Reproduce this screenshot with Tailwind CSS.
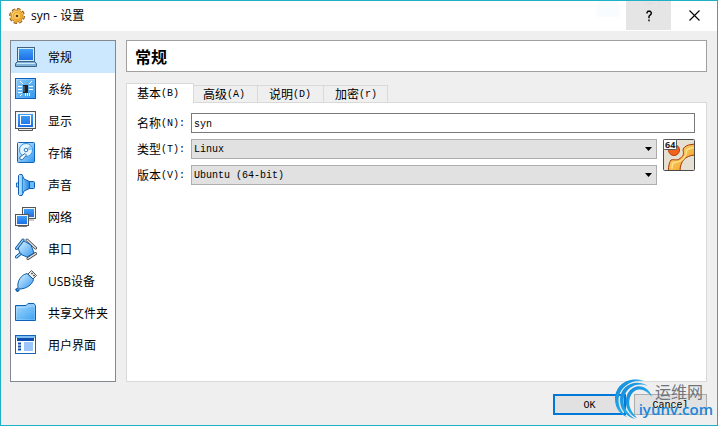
<!DOCTYPE html>
<html lang="zh-CN">
<head>
    <meta charset="UTF-8">
    <meta name="viewport" content="width=device-width, initial-scale=1.0">
    <title>syn - 设置</title>
    <script src="https://cdn.jsdelivr.net/npm/@tailwindcss/browser@4"></script>
</head>
<body class="bg-[#efefef] text-black text-xs font-['Open_Sans','Noto_Sans_CJK_SC',sans-serif]">
    <!-- Shared gradients for the icons -->
    <svg class="absolute w-0 h-0" aria-hidden="true">
        <defs>
            <linearGradient id="blue" x1="0" y1="0" x2="0" y2="1">
                <stop offset="0" stop-color="#41a0f6"/>
                <stop offset="1" stop-color="#1b6fe6"/>
            </linearGradient>
            <linearGradient id="sky" x1="0" y1="0" x2="1" y2="1">
                <stop offset="0" stop-color="#e2f5ff"/>
                <stop offset="1" stop-color="#2e97f2"/>
            </linearGradient>
            <linearGradient id="horn" x1="0" y1="0" x2="1" y2="0">
                <stop offset="0" stop-color="#c4e8ff"/>
                <stop offset="0.4" stop-color="#7cc4f8"/>
                <stop offset="1" stop-color="#1f7fdc"/>
            </linearGradient>
            <linearGradient id="gold" x1="0" y1="0" x2="1" y2="1">
                <stop offset="0" stop-color="#ffe08a"/>
                <stop offset="1" stop-color="#f0960f"/>
            </linearGradient>
            <linearGradient id="swirl" x1="0" y1="0" x2="1" y2="1">
                <stop offset="0" stop-color="#1485d6"/>
                <stop offset="0.5" stop-color="#23a9ea"/>
                <stop offset="1" stop-color="#1573c4"/>
            </linearGradient>
        </defs>
    </svg>

    <div class="relative min-h-screen flex flex-col border border-[#1fb0c5]">
        <!-- Title bar -->
        <header class="flex items-start h-[30px] bg-white">
            <div class="flex flex-1 items-center gap-[6px] h-[29px] pl-2">
                <svg class="w-4 h-4" viewBox="0 0 16 16">
                    <circle cx="8" cy="8" r="6.6" fill="none" stroke="#8a4f08" stroke-width="2.6" stroke-dasharray="3.2 1.98"/>
                    <circle cx="8" cy="8" r="6" fill="url(#gold)" stroke="#a8640c" stroke-width="0.8"/>
                    <circle cx="8" cy="8" r="6.3" fill="none" stroke="#f2b84a" stroke-width="1.4" stroke-dasharray="2.6 2.35"/>
                    <circle cx="8" cy="8" r="3.6" fill="#ffd060" stroke="#e0981e" stroke-width="0.8"/>
                    <circle cx="8" cy="8" r="1.3" fill="#5d3205"/>
                </svg>
                <h1>syn - 设置</h1>
            </div>
            <span class="w-[22px] h-4 mr-[7px] bg-[#f9fcff]"></span>
            <button class="flex items-center justify-center w-[45px] h-[29px] bg-[#e5e5e5]" aria-label="Help">
                <svg class="w-2 h-3" viewBox="0 0 8 12" fill="none" stroke="#000" stroke-width="1.4">
                    <path d="M2 3.4V2.4L3 1.2H5.2L6.2 2.4V4L4 6.2V8.2M4 9.6V11.2"/>
                </svg>
            </button>
            <button class="flex items-center justify-center w-[46px] h-[29px]" aria-label="Close">
                <svg class="w-[11px] h-[11px]" viewBox="0 0 11 11" stroke="#000" stroke-width="1.1">
                    <path d="M0.5 0.5L10.5 10.5M10.5 0.5L0.5 10.5"/>
                </svg>
            </button>
        </header>
        <span class="absolute top-0 right-[19px] text-xs leading-4 text-black/3" aria-hidden="true">窗口截图(W)</span>

        <main class="flex flex-1 gap-[10px] pl-[9px] pr-[10px] pt-[9px]">
            <!-- Categories -->
            <nav class="w-[106px] shrink-0 bg-white border border-[#828790] leading-[18px]">
                <a href="#general" class="flex items-center gap-[11px] h-8 pl-1 bg-[#cce8ff]">
                    <svg class="w-[22px] h-[22px] shrink-0" viewBox="0 0 22 22">
                        <rect x="2.5" y="1.5" width="17" height="14" fill="#d4edfb" stroke="#44637f"/>
                        <rect x="4" y="3" width="14" height="11" fill="url(#blue)"/>
                        <path d="M2.5 15.5H19.5L21.5 17.5V20.5H0.5V17.5Z" fill="#7fb2d6" stroke="#3d6484"/>
                        <path d="M2 17.5H20" stroke="#c9e8f8"/>
                    </svg>
                    <span class="pt-[2px]">常规</span>
                </a>
                <a href="#system" class="flex items-center gap-[11px] h-8 pl-1">
                    <svg class="w-[22px] h-[22px] shrink-0" viewBox="0 0 22 22">
                        <rect x="0.5" y="0.5" width="20" height="20" fill="url(#sky)" stroke="#0f5fbd"/>
                        <rect x="1.5" y="1.5" width="18" height="18" fill="#349cec" opacity="0.5"/>
                        <path d="M3 8.5H7M3 11.5H7M3 14.5H7M14 8.5H18M14 11.5H18M5 3L8 6M17 3L14 6M5 18L7 16M10.5 18V15M12.5 18V15M14.5 18V15" stroke="#fff"/>
                        <rect x="8" y="7" width="5" height="8" fill="#222"/>
                        <path d="M9 8V14" stroke="#888"/>
                    </svg>
                    <span class="pt-[2px]">系统</span>
                </a>
                <a href="#display" class="flex items-center gap-[11px] h-8 pl-1">
                    <svg class="w-[22px] h-[22px] shrink-0" viewBox="0 0 22 22">
                        <path d="M3.5 18.5H17.5V20.5H3.5Z" fill="#eee" stroke="#555"/>
                        <rect x="0.5" y="1.5" width="20" height="17" fill="#f4f4f4" stroke="#555"/>
                        <rect x="3" y="4" width="15" height="13" fill="url(#blue)"/>
                        <rect x="5.5" y="5.5" width="10" height="9" fill="none" stroke="#fff"/>
                    </svg>
                    <span class="pt-[2px]">显示</span>
                </a>
                <a href="#storage" class="flex items-center gap-[11px] h-8 pl-1">
                    <svg class="w-[22px] h-[22px] shrink-0" viewBox="0 0 22 22">
                        <rect x="2.5" y="0.5" width="17" height="20" rx="1" fill="url(#sky)" stroke="#0f63ba"/>
                        <circle cx="11" cy="8" r="6.5" fill="#e6f4fd" stroke="#3c93dc"/>
                        <path d="M11 8L15 3.5A6 6 0 0 1 17 8Z" fill="#8ecaf5"/>
                        <circle cx="11" cy="8" r="1.8" fill="#fff" stroke="#2b7ac4"/>
                        <path d="M5 15L10 11.5L11.5 13L7.5 17.5C5.500 18.5 4 16.500 5 15Z" fill="#fff" stroke="#195ba4" stroke-width="0.9"/>
                    </svg>
                    <span class="pt-[2px]">存储</span>
                </a>
                <a href="#audio" class="flex items-center gap-[11px] h-8 pl-1">
                    <svg class="w-[22px] h-[22px] shrink-0" viewBox="0 0 22 22">
                        <rect x="13.500" y="7.5" width="6" height="7" rx="1" fill="#6bbcf6" stroke="#0f5cb0"/>
                        <path d="M3.5 1.500L4.500 0.500H7L9 5L14.5 7.5V14.5L9 17L7 21.500H4.500L3.5 20.500Z" fill="url(#horn)" stroke="#0f5cb0"/>
                        <path d="M7.500 3V19" stroke="#2c87d8"/>
                        <path d="M3 9H1.5V13H3" fill="#b9e2ff" stroke="#1d6fc0"/>
                    </svg>
                    <span class="pt-[2px]">声音</span>
                </a>
                <a href="#network" class="flex items-center gap-[11px] h-8 pl-1">
                    <svg class="w-[22px] h-[22px] shrink-0" viewBox="0 0 22 22">
                        <path d="M13 14H19" stroke="#999"/>
                        <rect x="7.5" y="1.5" width="13" height="11" fill="#f4f4f4" stroke="#555"/>
                        <rect x="9" y="3" width="10" height="8" fill="url(#blue)"/>
                        <path d="M3 20.5H12" stroke="#777"/>
                        <rect x="0.5" y="8.5" width="13" height="11" fill="#f4f4f4" stroke="#555"/>
                        <rect x="2" y="10" width="10" height="8" fill="url(#blue)"/>
                    </svg>
                    <span class="pt-[2px]">网络</span>
                </a>
                <a href="#serial" class="flex items-center gap-[11px] h-8 pl-1">
                    <svg class="w-[22px] h-[22px] shrink-0" viewBox="0 0 22 22" stroke-linecap="round">
                        <path d="M12 2L20.5 10M13 20.500L20.5 15.500" stroke="#444" stroke-width="3"/>
                        <path d="M12 2L20.5 10M13 20.500L20.5 15.500" stroke="#e4e4e4" stroke-width="1.4"/>
                        <path d="M9 3L16 7L19 15L12 19L5 16L3 9Z" fill="url(#sky)" stroke="#0d5cab" stroke-linejoin="round"/>
                        <path d="M1.5 10.500L8 2M5 16L1.5 19" stroke="#0d5cab" stroke-width="3"/>
                        <path d="M1.5 10.500L8 2M5 16L1.5 19" stroke="#b5e2ff" stroke-width="1.2"/>
                    </svg>
                    <span class="pt-[2px]">串口</span>
                </a>
                <a href="#usb" class="flex items-center gap-[11px] h-8 pl-1">
                    <svg class="w-[22px] h-[22px] shrink-0" viewBox="0 0 22 22" stroke-linejoin="round">
                        <path d="M13 4L16.500 0.5L21.5 5.500L18 9Z" fill="#eee" stroke="#555"/>
                        <path d="M16.5 3L17.5 4M18.500 5L19.500 6" stroke="#333" stroke-width="1.4"/>
                        <path d="M3 18L0.800 19.500L2.5 21.5L4.5 19.5" fill="#5db3f3" stroke="#0d5cab" stroke-width="1.4"/>
                        <path d="M12 3.5C6 5 2 11 3 17.5L4.5 19C11 19 17 15 18.5 9.500Z" fill="url(#sky)" stroke="#0d5cab"/>
                    </svg>
                    <span class="pt-[2px]">USB设备</span>
                </a>
                <a href="#shared-folders" class="flex items-center gap-[11px] h-8 pl-1">
                    <svg class="w-[22px] h-[22px] shrink-0" viewBox="0 0 22 22">
                        <path d="M0.5 18.5V3.5H11L13 1.5H19L20.5 3.5V18.5Z" fill="#8fcdf8" stroke="#0e61b6"/>
                        <path d="M1.5 17.5V5.5H12L14 4.5H19.5V17.5Z" fill="url(#sky)"/>
                        <path d="M2 6H12L14 5H19V17L2 17Z" fill="#54b2f6" opacity="0.5"/>
                    </svg>
                    <span class="pt-[2px]">共享文件夹</span>
                </a>
                <a href="#user-interface" class="flex items-center gap-[11px] h-8 pl-1">
                    <svg class="w-[22px] h-[22px] shrink-0" viewBox="0 0 22 22">
                        <rect x="0.5" y="1.5" width="20" height="18" fill="#fff" stroke="#1562b8"/>
                        <rect x="1" y="2" width="19" height="2" fill="#7fbdf2"/>
                        <path d="M2 5.5H19" stroke="#0e4db0" stroke-width="3"/>
                        <rect x="9" y="8" width="9" height="9" fill="#9ac6fb"/>
                        <path d="M3 9.5H6M3 12.5H6M3 15.5H6" stroke="#0e4db0" stroke-width="2"/>
                    </svg>
                    <span class="pt-[2px]">用户界面</span>
                </a>
            </nav>

            <section class="flex flex-1 flex-col min-w-0">
                <h2 class="flex items-center h-8 pl-2 bg-white border border-[#a0a0a0] text-base font-bold font-['Noto_Sans_CJK_SC',sans-serif]">常规</h2>

                <!-- Tabs -->
                <div role="tablist" class="relative flex items-end mt-[11px] -mb-px leading-4">
                    <button role="tab" aria-selected="true" class="flex items-center w-[68px] h-5 pl-[10px] bg-white border border-b-0 border-[#d9d9d9]">基本<span class="font-['Liberation_Mono',monospace] text-[10px]">(B)</span></button>
                    <button role="tab" class="flex items-center w-16 h-[18px] pl-[9px] pt-[2px] border border-l-0 border-[#d9d9d9]">高级<span class="font-['Liberation_Mono',monospace] text-[10px]">(A)</span></button>
                    <button role="tab" class="flex items-center w-[66px] h-[18px] pl-[11px] pt-[2px] border border-l-0 border-[#d9d9d9]">说明<span class="font-['Liberation_Mono',monospace] text-[10px]">(D)</span></button>
                    <button role="tab" class="flex items-center w-16 h-[18px] pl-[11px] pt-[2px] border border-l-0 border-[#d9d9d9]">加密<span class="font-['Liberation_Mono',monospace] text-[10px]">(r)</span></button>
                </div>

                <!-- Basic tab -->
                <form class="flex-1 grid grid-cols-[48px_1fr_32px] content-start gap-[6px] bg-white border border-[#d9d9d9] pl-[10px] pr-[11px] pt-[10px]">
                    <label for="name" class="flex items-center h-5 pt-[2px] whitespace-nowrap">名称<span class="font-['Liberation_Mono',monospace] text-[10px]">(N):</span></label>
                    <input id="name" type="text" value="syn" class="col-span-2 min-w-0 h-5 px-[2px] pt-[2px] bg-white border border-[#7a7a7a] font-['Liberation_Mono',monospace] text-[10px]">

                    <label for="type" class="flex items-center h-5 pt-[2px] whitespace-nowrap">类型<span class="font-['Liberation_Mono',monospace] text-[10px]">(T):</span></label>
                    <div class="relative">
                        <select id="type" class="block appearance-none w-full h-5 px-[2px] pt-[2px] bg-[#e1e1e1] border border-[#adadad] font-['Liberation_Mono',monospace] text-[10px]">
                            <option>Linux</option>
                        </select>
                        <svg class="absolute right-[5px] top-2 w-[7px] h-1 pointer-events-none" viewBox="0 0 7 4"><path d="M0 0H7L3.5 4Z"/></svg>
                    </div>
                    <svg class="row-span-2 w-8 h-8" viewBox="0 0 32 32">
                        <rect x="0.5" y="0.5" width="31" height="31" rx="1" fill="#e6e0d3"/>
                        <circle cx="11" cy="11" r="5.5" fill="#f2641c" stroke="#b83f0c"/>
                        <path d="M5.5 31.5C5.5 27 6 24 8 21C11 20 14 22 17 19.500C20.500 17 21 15 20 11C20.500 8 23 7 25.500 6L31.5 5V16C22 17 17.500 22 17 31.5Z" fill="url(#gold)" stroke="#a63a0b"/>
                        <path d="M9 30C9 26 9.500 24 11 23.500C17 24 23.500 19 23.500 11.500C25 9.500 28 9 31 8.500" fill="none" stroke="#ffe28c" stroke-width="1.4"/>
                        <rect x="0.5" y="0.5" width="31" height="31" rx="1" fill="none" stroke="#4a4a4a"/>
                        <rect x="0.5" y="0.5" width="13" height="10" rx="1" fill="#fff" stroke="#555"/>
                        <text x="2" y="9" font-family="Open Sans, sans-serif" font-size="9" font-weight="700" fill="#222">64</text>
                    </svg>

                    <label for="version" class="flex items-center h-5 pt-[2px] whitespace-nowrap">版本<span class="font-['Liberation_Mono',monospace] text-[10px]">(V):</span></label>
                    <div class="relative">
                        <select id="version" class="block appearance-none w-full h-5 px-[2px] pt-[2px] bg-[#e1e1e1] border border-[#adadad] font-['Liberation_Mono',monospace] text-[10px]">
                            <option>Ubuntu (64-bit)</option>
                        </select>
                        <svg class="absolute right-[5px] top-2 w-[7px] h-1 pointer-events-none" viewBox="0 0 7 4"><path d="M0 0H7L3.5 4Z"/></svg>
                    </div>
                </form>
            </section>
        </main>

        <footer class="flex justify-end gap-2 px-[10px] pt-3 pb-[10px] font-['Liberation_Mono',monospace] text-[10px]">
            <button class="w-[73px] h-[21px] pt-[2px] bg-[#e1e1e1] border-2 border-[#0078d7]">OK</button>
            <button class="w-[73px] h-[21px] pt-[2px] bg-[#e1e1e1] border border-[#adadad]">Cancel</button>
        </footer>

        <!-- Watermark over the buttons -->
        <div class="absolute right-1 bottom-1 w-[98px] h-[42px] pointer-events-none">
            <svg class="absolute left-0 top-0 w-10 h-[42px]" viewBox="0 0 40 42" fill="url(#swirl)">
                <path d="M29 2C15 -3 0 5 0 20C0 30 6 36 12 38C6 33 2 26 4 17C6 8 16 0 29 2Z"/>
                <path d="M33 7C20 -1 5 7 5 21C5 31 12 38 20 40C12 34 7 27 9 18C12 8 22 3 33 7Z"/>
                <path d="M37 18C33 5 19 4 13 14C8 23 12 35 22 39C15 32 12 24 16 16C21 8 30 9 37 18Z"/>
            </svg>
            <div class="absolute right-0 top-[2px] text-right">
                <p class="pr-[10px] text-base leading-5 text-[#6c747c] font-['Noto_Sans_CJK_SC',sans-serif]">运维网</p>
                <p class="text-[15px] leading-4 font-semibold text-[#1a86dc]">iyunv.com</p>
            </div>
        </div>
    </div>
</body>
</html>
